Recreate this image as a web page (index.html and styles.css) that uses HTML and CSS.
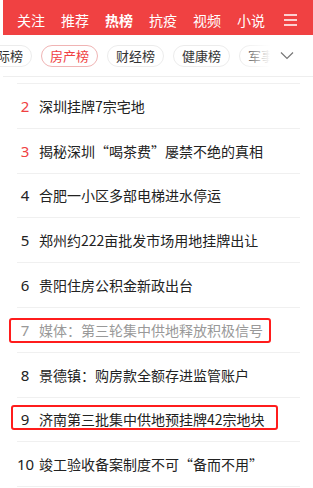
FILE: index.html
```html
<!DOCTYPE html>
<html lang="zh-CN">
<head>
<meta charset="utf-8">
<link rel="stylesheet" href="styles.css">
</head>
<body>
<div class="page">
  <header class="topbar">
    <nav class="channels">
      <span class="ch">关注</span>
      <span class="ch">推荐</span>
      <span class="ch active">热榜</span>
      <span class="ch">抗疫</span>
      <span class="ch">视频</span>
      <span class="ch">小说</span>
    </nav>
    <svg class="menu" width="13" height="12" viewBox="0 0 13 12"><path d="M0 1h13M0 6h13M0 11h13" stroke="#fff" stroke-width="1.6" fill="none"/></svg>
  </header>
  <div class="tabs">
    <div class="pills">
      <span class="pill first">国际榜</span>
      <span class="pill on">房产榜</span>
      <span class="pill">财经榜</span>
      <span class="pill">健康榜</span>
      <span class="pill">军事榜</span>
    </div>
    <div class="more">
      <svg width="14" height="9" viewBox="0 0 14 9"><path d="M1 1.5l6 6 6-6" stroke="#777" stroke-width="1.2" fill="none"/></svg>
    </div>
  </div>
  <div class="list">
    <div class="spacer"></div>
    <div class="row"><span class="num hot">2</span><span class="title">深圳挂牌7宗宅地</span></div>
    <div class="row"><span class="num hot">3</span><span class="title">揭秘深圳“喝茶费”屡禁不绝的真相</span></div>
    <div class="row"><span class="num">4</span><span class="title">合肥一小区多部电梯进水停运</span></div>
    <div class="row"><span class="num">5</span><span class="title">郑州约222亩批发市场用地挂牌出让</span></div>
    <div class="row"><span class="num">6</span><span class="title">贵阳住房公积金新政出台</span></div>
    <div class="row read"><span class="num">7</span><span class="title">媒体：第三轮集中供地释放积极信号</span></div>
    <div class="row"><span class="num">8</span><span class="title">景德镇：购房款全额存进监管账户</span></div>
    <div class="row"><span class="num">9</span><span class="title">济南第三批集中供地预挂牌42宗地块</span></div>
    <div class="row"><span class="num">10</span><span class="title">竣工验收备案制度不可“备而不用”</span></div>
    <div class="row last"></div>
  </div>
  <div class="mark mark7"></div>
  <div class="mark mark9"></div>
</div>
</body>
</html>
```
FILE: styles.css
```css
* { box-sizing: border-box; }
html, body { margin: 0; padding: 0; background: #fff; }
body { font-family: "Noto Sans CJK SC", "Noto Sans", sans-serif; }
.page { position: relative; width: 313px; height: 488px; overflow: hidden; }

.topbar {
  height: 35px;
  margin-left: 3px;
  background: #f04142;
  display: flex;
  align-items: center;
  padding-left: 14px;
}
.channels { display: flex; }
.ch {
  flex: none;
  width: 28px;
  margin-right: 16px;
  color: #fff;
  font-size: 14px;
  line-height: 20px;
  white-space: nowrap;
  position: relative;
  top: 2px;
}
.ch:last-child { margin-right: 0; }
.ch.active { font-weight: 700; }
.ch.active::after {
  content: "";
  position: absolute;
  left: 6px; right: 6px;
  bottom: -12px;
  height: 3px;
  border-radius: 2px;
  background: #fff;
}
.menu { flex: none; margin-left: 19px; position: relative; top: 2px; }

.tabs {
  height: 42px;
  border-bottom: 1px solid #eeeeee;
  display: flex;
  align-items: center;
  position: relative;
  margin-left: 3px;
}
.pills { display: flex; gap: 9px; margin-left: -28px; flex: 1; overflow: hidden; white-space: nowrap; }
.pill {
  flex: none;
  height: 22px;
  line-height: 20px;
  padding: 0 8px;
  font-size: 13px;
  color: #333;
  border: 1px solid #ececec;
  border-radius: 11px;
}
.pill.on { color: #f04142; border-color: #f0b4b4; }
.more {
  position: absolute;
  right: 0; top: 0; bottom: 0;
  width: 73px;
  display: flex;
  align-items: center;
  padding-left: 40px;
  background: linear-gradient(to right, rgba(255,255,255,0) 0, #fff 30px);
}

.spacer { height: 6px; }
.row {
  height: 44.8px;
  margin: 0 13px 0 17px;
  border-top: 1px solid #f0f0f0;
  display: flex;
  align-items: center;
}
.num {
  width: 16px;
  text-align: center;
  font-family: "Noto Sans", sans-serif;
  font-size: 15px;
  color: #222;
  flex: none;
}
.num.hot { color: #f04142; }
.title {
  margin-left: 6px;
  font-size: 14px;
  color: #222;
  white-space: nowrap;
}
.row.read .num, .row.read .title { color: #999; }

.mark {
  position: absolute;
  border: 2px solid #ff1c1c;
  border-radius: 3px;
}
.mark7 { left: 9px; top: 318px; width: 262px; height: 25px; }
.mark9 { left: 11px; top: 405px; width: 267px; height: 25px; }
```
